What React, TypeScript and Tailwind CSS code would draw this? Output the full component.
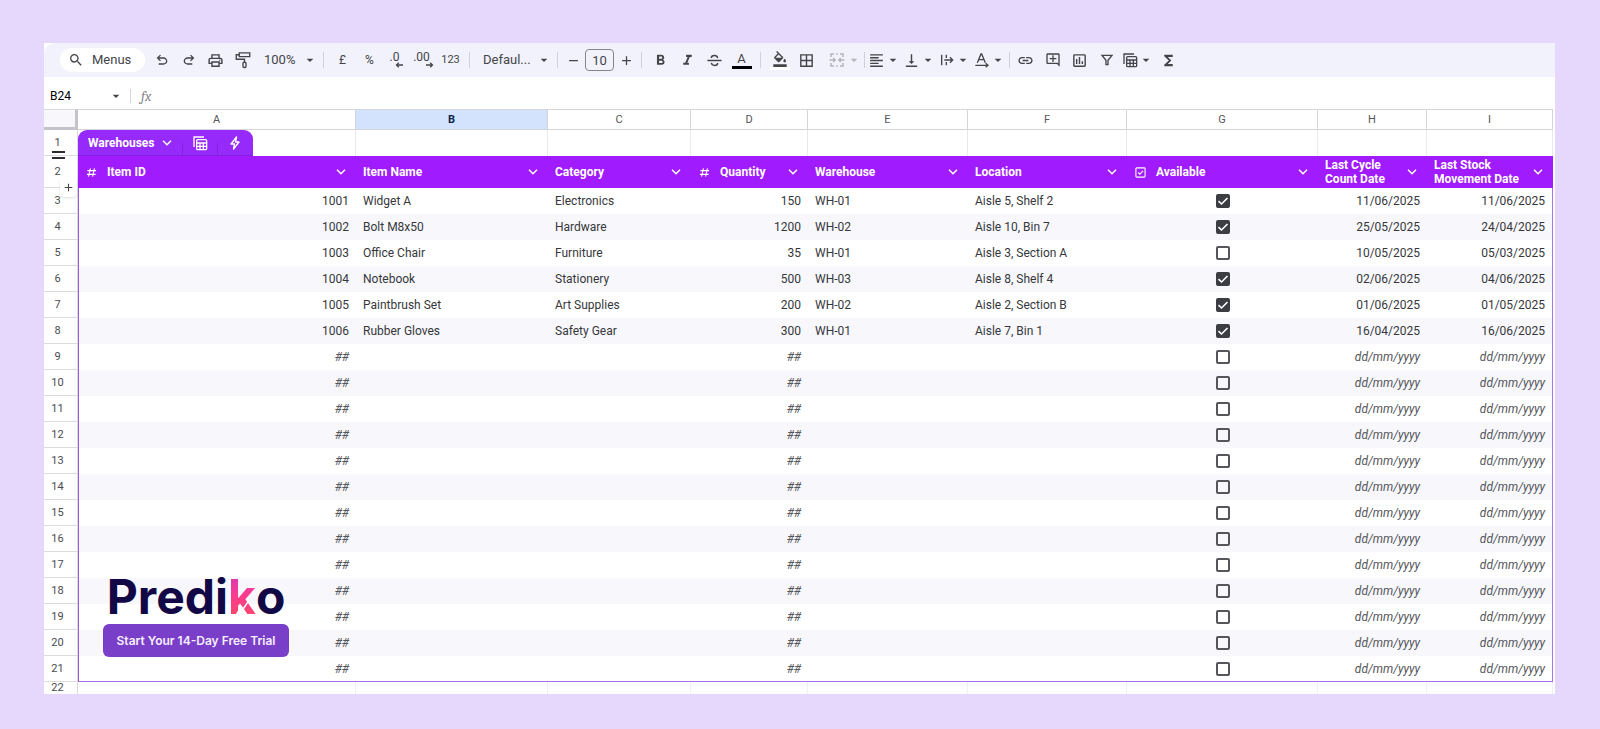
import type { ReactNode } from "react";
import {
  MdAdd,
  MdArrowDropDown,
  MdBorderAll,
  MdFormatAlignLeft,
  MdFormatBold,
  MdFormatItalic,
  MdFunctions,
  MdLink,
  MdOutlineAddComment,
  MdOutlineFormatColorFill,
  MdOutlineInsertChart,
  MdOutlinePrint,
  MdRemove,
  MdSearch,
  MdVerticalAlignBottom,
} from "react-icons/md";

type Row = {
  id?: string;
  name?: string;
  category?: string;
  quantity?: string;
  warehouse?: string;
  location?: string;
  available?: boolean;
  counted?: string;
  moved?: string;
};

const items: Row[] = [
  { id: "1001", name: "Widget A", category: "Electronics", quantity: "150", warehouse: "WH-01", location: "Aisle 5, Shelf 2", available: true, counted: "11/06/2025", moved: "11/06/2025" },
  { id: "1002", name: "Bolt M8x50", category: "Hardware", quantity: "1200", warehouse: "WH-02", location: "Aisle 10, Bin 7", available: true, counted: "25/05/2025", moved: "24/04/2025" },
  { id: "1003", name: "Office Chair", category: "Furniture", quantity: "35", warehouse: "WH-01", location: "Aisle 3, Section A", available: false, counted: "10/05/2025", moved: "05/03/2025" },
  { id: "1004", name: "Notebook", category: "Stationery", quantity: "500", warehouse: "WH-03", location: "Aisle 8, Shelf 4", available: true, counted: "02/06/2025", moved: "04/06/2025" },
  { id: "1005", name: "Paintbrush Set", category: "Art Supplies", quantity: "200", warehouse: "WH-02", location: "Aisle 2, Section B", available: true, counted: "01/06/2025", moved: "01/05/2025" },
  { id: "1006", name: "Rubber Gloves", category: "Safety Gear", quantity: "300", warehouse: "WH-01", location: "Aisle 7, Bin 1", available: true, counted: "16/04/2025", moved: "16/06/2025" },
];

const rows: Row[] = [...items, ...Array.from({ length: 13 }, () => ({}))];

const letters = ["A", "B", "C", "D", "E", "F", "G", "H", "I"];

function Tool({ label, children }: { label: string; children: ReactNode }) {
  return (
    <button type="button" aria-label={label} className="flex h-6 w-[27px] shrink-0 items-center justify-center">
      {children}
    </button>
  );
}

function MenuTool({ label, children, faded = false }: { label: string; children: ReactNode; faded?: boolean }) {
  return (
    <button
      type="button"
      aria-label={label}
      className={
        faded
          ? "flex h-6 w-[42px] shrink-0 items-center justify-end text-[#b4b5bb]"
          : "flex h-6 w-[35px] shrink-0 items-center justify-center"
      }
    >
      {children}
      <MdArrowDropDown size={16} className="shrink-0" />
    </button>
  );
}

function Divider({ tight = false }: { tight?: boolean }) {
  return <span className={tight ? "mx-0.5 h-4 w-px shrink-0 bg-[#cfd0da]" : "mx-[5px] h-4 w-px shrink-0 bg-[#cfd0da]"} />;
}

function UndoIcon({ flipped = false }: { flipped?: boolean }) {
  return (
    <svg viewBox="0 0 24 24" className={flipped ? "size-4 -scale-x-100" : "size-4"} fill="currentColor" aria-hidden="true">
      <path d="M7 19v-2h7.1q1.575 0 2.737-1T18 13.5 16.837 11 14.1 10H7.8l2.6 2.6L9 14 4 9l5-5 1.4 1.4L7.8 8h6.3q2.425 0 4.163 1.575T20 13.5t-1.737 3.925T14.1 19z" />
    </svg>
  );
}

function RollerIcon() {
  return (
    <svg viewBox="0 0 24 24" className="size-[18px]" fill="none" stroke="currentColor" strokeWidth="1.800" aria-hidden="true">
      <path d="M7 2.500h14v5H7zM7 5H3v6h11v4" />
      <rect x="12" y="15" width="4" height="7" rx="1.500" />
    </svg>
  );
}

function DecimalIcon({ digits, grow = false }: { digits: string; grow?: boolean }) {
  return (
    <span className="flex flex-col items-end leading-none">
      <span className="pr-1 text-[12px] leading-[9px]">{digits}</span>
      <svg viewBox="0 0 8 6" className={grow ? "h-1.5 w-2 -scale-x-100" : "h-1.5 w-2"} fill="none" stroke="currentColor" strokeWidth="1.300" aria-hidden="true">
        <path d="M8 3H1.500M3.800.700 1.500 3l2.300 2.300" />
      </svg>
    </span>
  );
}

function StrikeIcon() {
  return (
    <svg viewBox="0 0 24 24" className="size-[17px]" fill="none" stroke="currentColor" strokeWidth="2" aria-hidden="true">
      <path d="M2 12h20M16.500 8.500C16 6 14 5 12 5S7.500 6 7.500 8.500M7.500 15.500C8 18 10 19 12 19s4.500-1 4.500-3.500" />
    </svg>
  );
}

function MergeIcon() {
  return (
    <svg viewBox="0 0 24 24" className="size-[18px] shrink-0" fill="none" stroke="currentColor" strokeWidth="2" aria-hidden="true">
      <path d="M4 8V4h4M11 4h2M16 4h4v4M4 16v4h4M11 20h2M16 20h4v-4M2 12h7M22 12h-7M7 9.500 9.500 12 7 14.500M17 9.500 14.500 12l2.500 2.500" />
    </svg>
  );
}

function OverflowIcon() {
  return (
    <svg viewBox="0 0 24 24" className="size-4 shrink-0" fill="none" stroke="currentColor" strokeWidth="2" aria-hidden="true">
      <path d="M4 4v16M11 4v5M11 15v5M8 12h12M16.500 8l4 4-4 4" />
    </svg>
  );
}

function RotateIcon() {
  return (
    <svg viewBox="0 0 24 24" className="size-4 shrink-0" fill="none" stroke="currentColor" strokeWidth="2" aria-hidden="true">
      <path d="M5 16 10.500 3h1L17 16M7 11.500h8M2 20h18M17.500 17l3.500 3-3.500 3" />
    </svg>
  );
}

function FilterIcon() {
  return (
    <svg viewBox="0 0 24 24" className="size-4" fill="none" stroke="currentColor" strokeWidth="2" aria-hidden="true">
      <path d="M4.500 5h15L13.500 12.500V19h-3v-6.500z" />
    </svg>
  );
}

function TableIcon({ className }: { className: string }) {
  return (
    <svg viewBox="0 0 24 24" className={className} fill="none" stroke="currentColor" strokeWidth="2" aria-hidden="true">
      <path d="M3 18V3h15" />
      <rect x="7" y="7" width="15" height="15" rx="1.500" />
      <path d="M7 12h15M7 17h15M12 12v10M17 12v10" />
    </svg>
  );
}

function Chevron() {
  return (
    <svg viewBox="0 0 10 6" className="h-1.5 w-2.5" fill="none" stroke="currentColor" strokeWidth="1.500" aria-hidden="true">
      <path d="M1 .800 5 4.800 9 .800" />
    </svg>
  );
}

function HashIcon() {
  return (
    <svg viewBox="0 0 12 12" className="size-[11px] shrink-0" fill="none" stroke="currentColor" strokeWidth="1.200" aria-hidden="true">
      <path d="M4.800 1.500 2.800 10.500M9.200 1.500 7.200 10.500M1.500 4h9.500M1 8h9.500" />
    </svg>
  );
}

function CheckBoxIcon() {
  return (
    <svg viewBox="0 0 12 12" className="size-[11px] shrink-0" fill="none" stroke="currentColor" strokeWidth="1.200" aria-hidden="true">
      <rect x="1" y="1" width="10" height="10" rx="1" />
      <path d="M3.500 6 5.300 7.800 8.800 4.200" />
    </svg>
  );
}

const columns: { title: string; icon?: ReactNode }[] = [
  { title: "Item ID", icon: <HashIcon /> },
  { title: "Item Name" },
  { title: "Category" },
  { title: "Quantity", icon: <HashIcon /> },
  { title: "Warehouse" },
  { title: "Location" },
  { title: "Available", icon: <CheckBoxIcon /> },
  { title: "Last Cycle Count Date" },
  { title: "Last Stock Movement Date" },
];

function Toolbar() {
  return (
    <div className="flex h-[34px] items-center overflow-hidden rounded-tl-xl bg-[#f1f2fb] pl-4 text-[#444549]">
      <button type="button" className="mr-[3px] flex h-6 w-[85px] shrink-0 items-center gap-2 rounded-full bg-white pl-2 text-[13px]">
        <MdSearch size={16} />
        Menus
      </button>
      <Tool label="Undo"><UndoIcon /></Tool>
      <Tool label="Redo"><UndoIcon flipped /></Tool>
      <Tool label="Print"><MdOutlinePrint size={17} /></Tool>
      <Tool label="Paint format"><RollerIcon /></Tool>
      <button type="button" className="flex h-6 w-[62px] shrink-0 items-center justify-between pl-2 text-[13px]">
        100%
        <MdArrowDropDown size={16} />
      </button>
      <Divider />
      <Tool label="Format as currency"><span className="text-[12px]">£</span></Tool>
      <Tool label="Format as per cent"><span className="text-[12px]">%</span></Tool>
      <Tool label="Decrease decimal places"><DecimalIcon digits=".0" /></Tool>
      <Tool label="Increase decimal places"><DecimalIcon digits=".00" grow /></Tool>
      <Tool label="More formats"><span className="text-[11px]">123</span></Tool>
      <Divider />
      <button type="button" className="flex h-6 w-[77px] shrink-0 items-center justify-between pl-2 text-[13px]">
        Defaul...
        <MdArrowDropDown size={16} />
      </button>
      <Divider />
      <button type="button" aria-label="Decrease font size" className="flex h-6 w-5 shrink-0 items-center justify-center"><MdRemove size={15} /></button>
      <input aria-label="Font size" defaultValue="10" className="mx-0.5 h-[22px] w-[29px] shrink-0 rounded border border-[#85868c] bg-transparent text-center text-[13px]" />
      <button type="button" aria-label="Increase font size" className="flex h-6 w-5 shrink-0 items-center justify-center"><MdAdd size={15} /></button>
      <Divider />
      <Tool label="Bold"><MdFormatBold size={17} /></Tool>
      <Tool label="Italic"><MdFormatItalic size={17} /></Tool>
      <Tool label="Strikethrough"><StrikeIcon /></Tool>
      <Tool label="Text colour">
        <span className="flex w-5 flex-col items-center border-b-3 border-black text-[13px] leading-[14px]">A</span>
      </Tool>
      <Divider />
      <Tool label="Fill colour">
        <span className="flex w-5 flex-col items-center border-b-3 border-white"><MdOutlineFormatColorFill size={16} /></span>
      </Tool>
      <Tool label="Borders"><MdBorderAll size={17} /></Tool>
      <MenuTool label="Merge cells" faded><MergeIcon /></MenuTool>
      <Divider tight />
      <MenuTool label="Horizontal align"><MdFormatAlignLeft size={17} className="shrink-0" /></MenuTool>
      <MenuTool label="Vertical align"><MdVerticalAlignBottom size={17} className="shrink-0" /></MenuTool>
      <MenuTool label="Text wrapping"><OverflowIcon /></MenuTool>
      <MenuTool label="Text rotation"><RotateIcon /></MenuTool>
      <Divider tight />
      <Tool label="Insert link"><MdLink size={17} /></Tool>
      <Tool label="Insert comment"><MdOutlineAddComment size={16} /></Tool>
      <Tool label="Insert chart"><MdOutlineInsertChart size={17} /></Tool>
      <Tool label="Create a filter"><FilterIcon /></Tool>
      <MenuTool label="Tables"><TableIcon className="size-4 shrink-0" /></MenuTool>
      <Tool label="Functions"><MdFunctions size={17} /></Tool>
    </div>
  );
}

function FormulaBar() {
  return (
    <div className="flex h-8 items-center pt-1.5 pl-1 text-[#444549]">
      <input aria-label="Name box" defaultValue="B24" className="w-[60px] pl-0.5 text-[12px] text-black" />
      <button type="button" aria-label="Named ranges"><MdArrowDropDown size={16} /></button>
      <span className="mx-1.5 h-3.5 w-px bg-[#d4d4da]" />
      <label htmlFor="formula" className="px-1 font-serif text-[14px] text-[#85868c] italic">fx</label>
      <input id="formula" className="grow" />
    </div>
  );
}

function RowNumber({ n }: { n: number }) {
  return (
    <th scope="row" className="border-r border-b border-r-[#d9d9de] border-b-[#dcdce0] bg-white pr-1.5 text-center text-[11px] font-normal text-[#4a4b50]">
      {n}
    </th>
  );
}

function DataRow({ row, n }: { row: Row; n: number }) {
  const number = "px-[7px] text-right";
  const empty = "px-[7px] text-right text-[#55565b] italic";
  const last = n === 21;
  return (
    <tr className={`h-[26px] ${n % 2 === 0 ? "bg-[#f7f7fc]" : "bg-white"} ${last ? "[&>td]:border-b [&>td]:border-b-[#a873ea]" : ""}`}>
      <RowNumber n={n} />
      <td className={`border-l border-l-[#9a5ae0] ${row.id ? number : empty}`}>{row.id ?? "##"}</td>
      <td className="px-[7px]">{row.name}</td>
      <td className="px-[7px]">{row.category}</td>
      <td className={row.quantity ? number : empty}>{row.quantity ?? "##"}</td>
      <td className="px-[7px]">{row.warehouse}</td>
      <td className="px-[7px]">{row.location}</td>
      <td>
        <label className="mx-auto grid size-3.5 place-items-center">
          <input
            type="checkbox"
            aria-label={`Available, row ${n}`}
            defaultChecked={row.available}
            className="peer col-start-1 row-start-1 size-3.5 appearance-none rounded-[2px] border-2 border-[#55565a] checked:border-[#3c3d42] checked:bg-[#3c3d42]"
          />
          <svg viewBox="0 0 14 14" className="pointer-events-none invisible col-start-1 row-start-1 size-3.5 peer-checked:visible" fill="none" stroke="#fff" strokeWidth="1.600" aria-hidden="true">
            <path d="M2.500 7.200 5.500 10 11.500 4" />
          </svg>
        </label>
      </td>
      <td className={row.counted ? number : empty}>{row.counted ?? "dd/mm/yyyy"}</td>
      <td className={`border-r border-r-[#a873ea] ${row.moved ? number : empty}`}>{row.moved ?? "dd/mm/yyyy"}</td>
    </tr>
  );
}

function Grid() {
  return (
    <table className="w-full table-fixed border-separate border-spacing-0 text-[12px] leading-4 text-[#36373b]">
      <colgroup>
        <col className="w-[34px]" />
        <col className="w-[278px]" />
        <col className="w-[192px]" />
        <col className="w-[143px]" />
        <col className="w-[117px]" />
        <col className="w-[160px]" />
        <col className="w-[159px]" />
        <col className="w-[191px]" />
        <col className="w-[109px]" />
        <col className="w-[126px]" />
      </colgroup>
      <thead>
        <tr className="h-[21px]">
          <td className="border-t border-r-3 border-b-3 border-t-[#d9d9de] border-r-[#c3c3c9] border-b-[#c3c3c9] bg-[#f8f8fc]" />
          {letters.map((letter) => (
            <th
              key={letter}
              scope="col"
              className={
                letter === "B"
                  ? "border-t border-r border-b border-[#d4d5da] bg-[#d3e2fd] text-[11px] font-bold text-[#0b1f4b]"
                  : "border-t border-r border-b border-[#d4d5da] text-[11px] font-normal text-[#55565b]"
              }
            >
              {letter}
            </th>
          ))}
        </tr>
        <tr className="h-[26px]">
          <RowNumber n={1} />
          <td className="border-r border-[#ebe9f0] p-0">
            <div className="flex h-[26px] w-[175px] items-stretch rounded-t-[9px] border-b border-[#8420dc] bg-[#952afa] text-white">
              <button type="button" className="flex w-[104px] items-center justify-between pr-2.5 pl-2.5 text-[12px] font-bold">
                Warehouses
                <Chevron />
              </button>
              <span className="h-3 w-px self-end bg-[#8420dc]" />
              <button type="button" aria-label="Table views" className="flex w-[34px] items-center justify-center">
                <TableIcon className="size-4" />
              </button>
              <span className="h-3 w-px self-end bg-[#8420dc]" />
              <button type="button" aria-label="Automations" className="flex w-[34px] items-center justify-center">
                <svg viewBox="0 0 14 16" className="h-4 w-3.5" fill="none" stroke="currentColor" strokeWidth="1.400" strokeLinejoin="round" aria-hidden="true">
                  <path d="M8.500 2 3 9h3.500L5.500 14 11 7H7.500z" />
                </svg>
              </button>
            </div>
          </td>
          {letters.slice(1).map((letter) => (
            <td key={letter} className="border-r border-[#ebe9f0]" />
          ))}
        </tr>
        <tr className="h-8 text-white">
          <RowNumber n={2} />
          {columns.map((column) => (
            <th key={column.title} scope="col" className="bg-[#a01cff] p-0 text-left leading-[14px] font-bold">
              <div className={column.icon ? "flex items-center gap-2.5 pr-2.5 pl-2" : "flex items-center pr-2.5 pl-[7px]"}>
                {column.icon}
                <span className="grow">{column.title}</span>
                <button type="button" aria-label={`${column.title} options`} className="shrink-0">
                  <Chevron />
                </button>
              </div>
            </th>
          ))}
        </tr>
      </thead>
      <tbody>
        {rows.map((row, i) => (
          <DataRow key={i} row={row} n={i + 3} />
        ))}
        <tr>
          <th scope="row" className="border-r border-[#d9d9de] p-0 pr-1.5 text-center text-[11px] leading-3 font-normal text-[#4a4b50]">
            22
          </th>
          {letters.map((letter) => (
            <td key={letter} className="border-r border-[#f1eff5] p-0" />
          ))}
        </tr>
      </tbody>
    </table>
  );
}

function Promo() {
  return (
    <div className="absolute bottom-[37px] left-[59px] flex w-[186px] flex-col">
      <div className="flex justify-center pb-[3px] font-['Inter',sans-serif] text-[48px] leading-[48px] font-bold text-[#110845]">
        <span>Predi</span>
        <span className="relative">
          <span className="bg-linear-to-b from-[#c92fc0] via-[#fd3c8b] to-[#fd4a5f] bg-clip-text text-transparent">k</span>
          <svg viewBox="0 0 28 48" className="absolute inset-0 h-12 w-7" fill="none" stroke="#fff" strokeWidth="1.500" aria-hidden="true">
            <path d="M7 44 13 34l1.500 3 6-9" />
          </svg>
        </span>
        <span>o</span>
      </div>
      <a href="#trial" className="flex h-[33px] items-center justify-center rounded-md bg-[#7a3fc8] font-['Inter',sans-serif] text-[12px] font-semibold text-[#f6efff]">
        Start Your 14-Day Free Trial
      </a>
    </div>
  );
}

export default function App() {
  return (
    <main className="min-h-screen bg-[#e6d7fc] pt-[43px] pr-[45px] pb-[35px] pl-11 font-['Roboto',sans-serif]">
      <div className="relative bg-white">
        <Toolbar />
        <FormulaBar />
        <div className="relative pr-0.5">
          <Grid />
          <span className="absolute top-[42px] left-2 h-2 w-[13px] border-y-2 border-[#2b2c30]" />
          <button type="button" aria-label="Add row" className="absolute top-[68px] left-4 flex h-5 w-[17px] items-center justify-center rounded-sm bg-white text-[#444549] shadow-sm">
            <MdAdd size={13} />
          </button>
        </div>
        <Promo />
      </div>
    </main>
  );
}
